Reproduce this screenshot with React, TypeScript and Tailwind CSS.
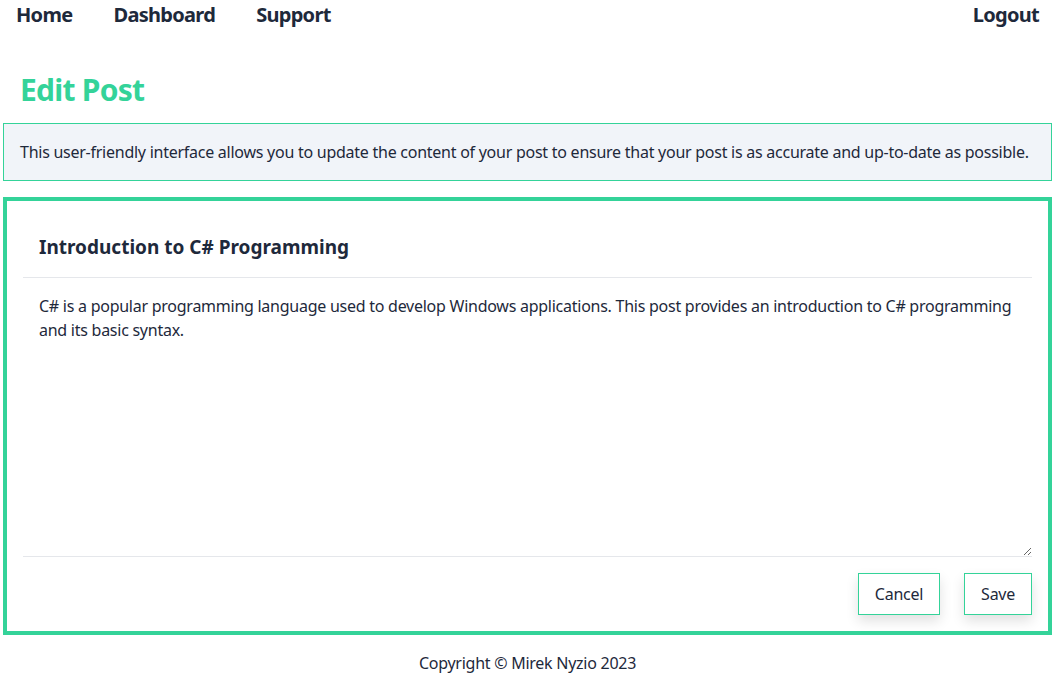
import React from "react";

export default function App() {
  const font = { fontFamily: '"Noto Sans", "Open Sans", sans-serif' };
  return (
    <div className="min-h-screen bg-white text-[#1e293b]" style={font}>
      <nav className="flex h-[30px] items-center justify-between px-4 text-[20px] font-bold leading-[30px] tracking-[-0.035em]">
        <div className="flex gap-[41px]">
          <a>Home</a>
          <a>Dashboard</a>
          <a>Support</a>
        </div>
        <a>Logout</a>
      </nav>
      <h1 className="mt-[42px] px-5 text-[30px] font-bold leading-[36px] tracking-[-0.025em] text-[#34d399]">Edit Post</h1>
      <div className="mx-[3px] mt-[15px] whitespace-nowrap border border-[#34d399] bg-[#f1f4f9] px-4 py-4 text-[16px] leading-6 tracking-[-0.016em]">
        This user-friendly interface allows you to update the content of your post to ensure that your post is as accurate and up-to-date as possible.
      </div>
      <div className="mx-[3px] mt-4 border-4 border-[#34d399] p-4">
        <div className="border-b border-[#e5e7eb] px-4 py-4">
          <h2 className="text-[19px] font-bold leading-7">Introduction to C# Programming</h2>
        </div>
        <textarea
          className="block h-[278px] w-full resize-y px-4 py-4 text-[16px] leading-6 tracking-[-0.016em] text-[#1e293b] outline-none"
          style={font}
          defaultValue="C# is a popular programming language used to develop Windows applications. This post provides an introduction to C# programming and its basic syntax."
        />
        <div className="flex justify-end gap-6 border-t border-[#e5e7eb] pt-4">
          <button className="border border-[#34d399] bg-white px-4 py-2 text-[16px] leading-6 tracking-[-0.016em] shadow-[0_6px_12px_rgba(0,0,0,0.12)]">Cancel</button>
          <button className="border border-[#34d399] bg-white px-4 py-2 text-[16px] leading-6 tracking-[-0.016em] shadow-[0_6px_12px_rgba(0,0,0,0.12)]">Save</button>
        </div>
      </div>
      <footer className="mt-4 text-center text-[16px] leading-6 tracking-[-0.016em]">Copyright © Mirek Nyzio 2023</footer>
    </div>
  );
}
